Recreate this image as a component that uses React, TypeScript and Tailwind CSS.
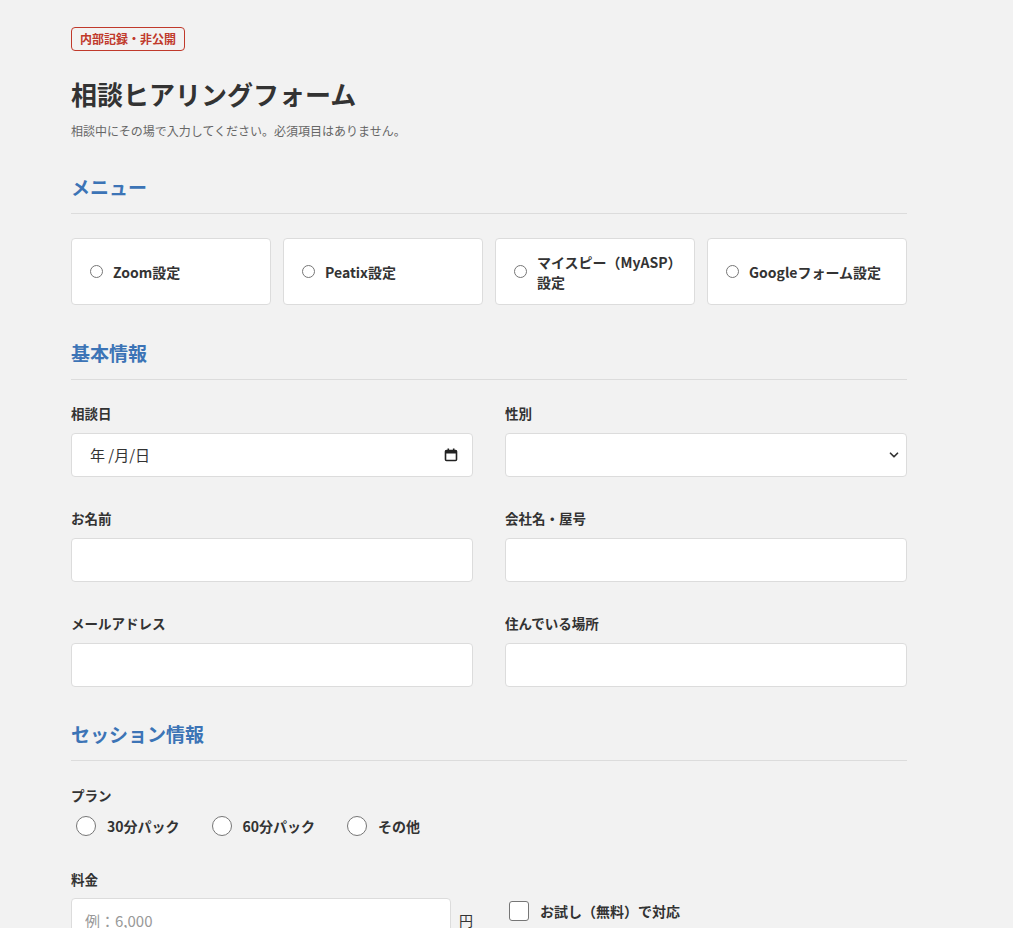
import { ChevronDown } from 'lucide-react'

const menus = ['Zoom設定', 'Peatix設定', 'マイスピー（MyASP）設定', 'Googleフォーム設定']
const plans = ['30分パック', '60分パック', 'その他']

function SectionTitle({ children, className = '' }: { children: React.ReactNode; className?: string }) {
  return (
    <h2 className={`border-b border-[#dcdcdc] pb-[12px] text-[19px] font-bold leading-[28px] text-[#3c74b6] ${className}`}>
      {children}
    </h2>
  )
}

function Label({ children }: { children: React.ReactNode }) {
  return <div className="mb-[10px] text-[13.5px] font-bold leading-[20px] text-[#333]">{children}</div>
}

function TextField() {
  return (
    <input
      type="text"
      className="h-[44px] w-full rounded-[4px] border border-[#dcdcdc] bg-white px-[13px] text-[15px] outline-none"
    />
  )
}

function CalendarIcon() {
  return (
    <svg width="14" height="14" viewBox="0 0 14 14" className="text-[#222]">
      <rect x="1.5" y="2.5" width="11" height="10" rx="1" fill="none" stroke="currentColor" strokeWidth="1.6" />
      <rect x="1.5" y="2.5" width="11" height="3" fill="currentColor" />
      <rect x="3.5" y="0.5" width="1.6" height="2.5" fill="currentColor" />
      <rect x="8.9" y="0.5" width="1.6" height="2.5" fill="currentColor" />
    </svg>
  )
}

export default function App() {
  return (
    <div
      className="min-h-[928px] bg-[#f2f2f2] text-[#333]"
      style={{ fontFamily: '"Noto Sans CJK JP", "Noto Sans", sans-serif' }}
    >
      <div className="w-[907px] pl-[71px] pt-[27px] pb-[40px]">
        {/* header */}
        <div className="flex h-[24px] w-fit items-center rounded-[4px] border border-[#c0392b] px-[8px] text-[12px] font-bold leading-[22px] text-[#c0392b]">
          内部記録・非公開
        </div>
        <h1 className="mt-[25px] text-[26px] font-bold leading-[36px] text-[#333]">相談ヒアリングフォーム</h1>
        <p className="mt-[10px] text-[12px] leading-[18px] text-[#666]">
          相談中にその場で入力してください。必須項目はありません。
        </p>

        {/* menu */}
        <SectionTitle className="mt-[33px]">メニュー</SectionTitle>
        <div className="mt-[24px] grid grid-cols-4 gap-[12px]">
          {menus.map((m) => (
            <label
              key={m}
              className="flex h-[67px] items-center gap-[10px] rounded-[4px] border border-[#dcdcdc] bg-white pl-[18px] pr-[14px]"
            >
              <span className="h-[13px] w-[13px] shrink-0 rounded-full border border-[#767676] bg-white" />
              <span className="text-[14px] font-bold leading-[20px] text-[#333]">{m}</span>
            </label>
          ))}
        </div>

        {/* basic info */}
        <SectionTitle className="mt-[34px]">基本情報</SectionTitle>
        <div className="mt-[23px] grid grid-cols-2 gap-x-[32px] gap-y-[31px]">
          <div>
            <Label>相談日</Label>
            <div className="flex h-[44px] items-center justify-between rounded-[4px] border border-[#dcdcdc] bg-white pl-[18px] pr-[14px] text-[15px] text-[#333]">
              <span>年 /月/日</span>
              <CalendarIcon />
            </div>
          </div>
          <div>
            <Label>性別</Label>
            <div className="flex h-[44px] items-center justify-end rounded-[4px] border border-[#dcdcdc] bg-white pr-[5px]">
              <ChevronDown size={14} strokeWidth={3} className="text-[#333]" />
            </div>
          </div>
          <div>
            <Label>お名前</Label>
            <TextField />
          </div>
          <div>
            <Label>会社名・屋号</Label>
            <TextField />
          </div>
          <div>
            <Label>メールアドレス</Label>
            <TextField />
          </div>
          <div>
            <Label>住んでいる場所</Label>
            <TextField />
          </div>
        </div>

        {/* session */}
        <SectionTitle className="mt-[33px]">セッション情報</SectionTitle>
        <div className="mt-[24px] text-[13.5px] font-bold leading-[20px]">プラン</div>
        <div className="mt-[11px] flex items-center gap-[32px] pl-[5px]">
          {plans.map((p) => (
            <label key={p} className="flex items-center gap-[11px]">
              <span className="h-[20px] w-[20px] rounded-full border border-[#767676] bg-white" />
              <span className="text-[14px] font-bold leading-[20px] text-[#333]">{p}</span>
            </label>
          ))}
        </div>

        <div className="mt-[33px] text-[13.5px] font-bold leading-[20px]">料金</div>
        <div className="mt-[9px] grid grid-cols-2 gap-x-[32px]">
          <div className="flex items-center gap-[8px]">
            <input
              type="text"
              placeholder="例：6,000"
              className="h-[44px] w-[380px] rounded-[4px] border border-[#dcdcdc] bg-white px-[13px] text-[15px] outline-none placeholder:text-[#999]"
            />
            <span className="text-[14px] leading-[20px] text-[#333]">円</span>
          </div>
          <label className="flex items-start gap-[11px] self-start pl-[4px] pt-[3px]">
            <span className="h-[20px] w-[20px] rounded-[3px] border border-[#767676] bg-white" />
            <span className="text-[14px] font-bold leading-[20px] text-[#333]">お試し（無料）で対応</span>
          </label>
        </div>
      </div>
    </div>
  )
}
